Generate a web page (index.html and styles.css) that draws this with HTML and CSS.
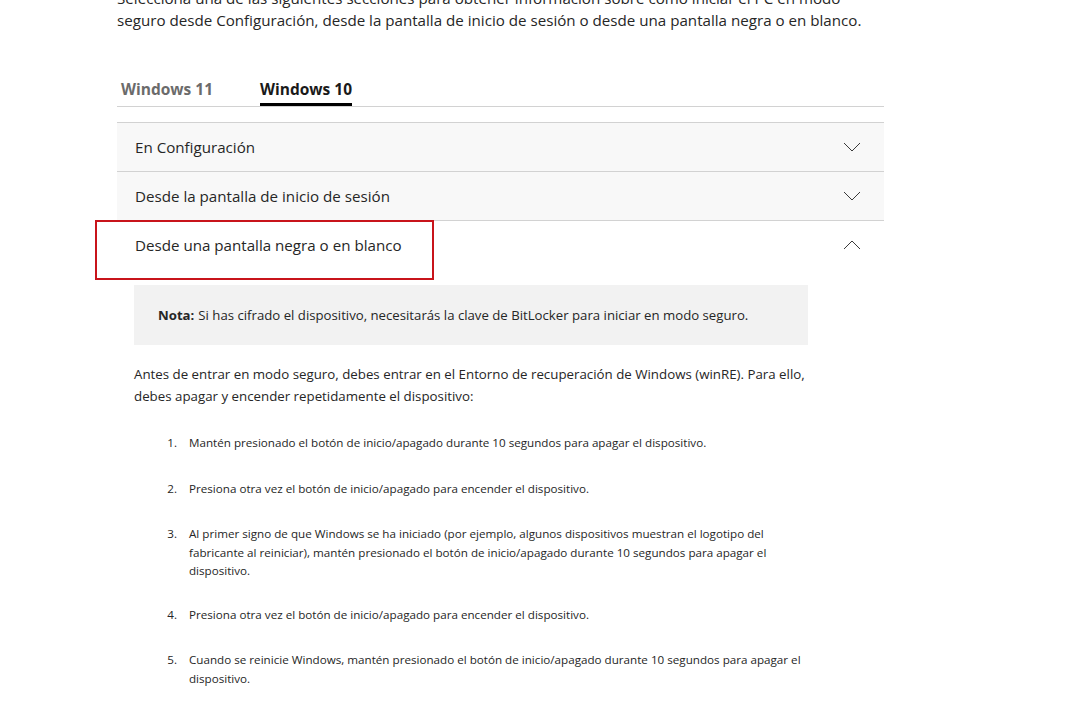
FILE: index.html
```html
<!DOCTYPE html>
<html lang="es">
<head>
<meta charset="utf-8">
<title>Modo seguro</title>
<link rel="stylesheet" href="styles.css">
</head>
<body>
<main class="page">
  <p class="intro">Selecciona una de las siguientes secciones para obtener información sobre cómo iniciar el PC en modo seguro desde Configuración, desde la pantalla de inicio de sesión o desde una pantalla negra o en blanco.</p>

  <nav class="tabs">
    <span class="tab">Windows 11</span>
    <span class="tab tab-active">Windows 10</span>
  </nav>

  <section class="accordion">
    <div class="item">
      <div class="item-head">
        <span>En Configuración</span>
        <svg class="chev" width="18" height="10" viewBox="0 0 18 10"><polyline points="1,1 9,9 17,1" fill="none" stroke="#3a3a3a" stroke-width="1"/></svg>
      </div>
    </div>
    <div class="item">
      <div class="item-head">
        <span>Desde la pantalla de inicio de sesión</span>
        <svg class="chev" width="18" height="10" viewBox="0 0 18 10"><polyline points="1,1 9,9 17,1" fill="none" stroke="#3a3a3a" stroke-width="1"/></svg>
      </div>
    </div>
    <div class="item item-open">
      <div class="highlight"></div>
      <div class="item-head">
        <span>Desde una pantalla negra o en blanco</span>
        <svg class="chev" width="18" height="10" viewBox="0 0 18 10"><polyline points="1,9 9,1 17,9" fill="none" stroke="#3a3a3a" stroke-width="1"/></svg>
      </div>
      <div class="panel">
        <div class="note"><b>Nota:</b> Si has cifrado el dispositivo, necesitarás la clave de BitLocker para iniciar en modo seguro.</div>
        <p class="body-text">Antes de entrar en modo seguro, debes entrar en el Entorno de recuperación de Windows (winRE). Para ello, debes apagar y encender repetidamente el dispositivo:</p>
        <ol class="steps">
          <li>Mantén presionado el botón de inicio/apagado durante 10 segundos para apagar el dispositivo.</li>
          <li>Presiona otra vez el botón de inicio/apagado para encender el dispositivo.</li>
          <li>Al primer signo de que Windows se ha iniciado (por ejemplo, algunos dispositivos muestran el logotipo del fabricante al reiniciar), mantén presionado el botón de inicio/apagado durante 10 segundos para apagar el dispositivo.</li>
          <li>Presiona otra vez el botón de inicio/apagado para encender el dispositivo.</li>
          <li>Cuando se reinicie Windows, mantén presionado el botón de inicio/apagado durante 10 segundos para apagar el dispositivo.</li>
        </ol>
      </div>
    </div>
  </section>
</main>
</body>
</html>
```

FILE: styles.css
```css
*, *::before, *::after { box-sizing: border-box; }
html, body { margin: 0; padding: 0; background: #fff; }
body {
  font-family: "Open Sans", "Noto Sans", "Liberation Sans", sans-serif;
  color: #262626;
  overflow: hidden;
  height: 708px;
}
.page {
  width: 767px;
  margin-left: 117px;
}
.intro {
  margin: -13px 0 0 0;
  font-size: 15.15px;
  line-height: 22px;
  width: 760px;
}
.tabs {
  display: flex;
  gap: 47px;
  margin-top: 48px;
  padding-left: 4px;
  border-bottom: 1px solid #d2d2d2;
}
.tab {
  font-size: 15.5px;
  font-weight: 700;
  line-height: 20px;
  color: #6b6b6b;
  padding-bottom: 4px;
  border-bottom: 3px solid transparent;
}
.tab-active {
  color: #1a1a1a;
  border-bottom-color: #000;
}
.accordion {
  margin-top: 15px;
}
.item {
  border-top: 1px solid #d2d2d2;
  background: #f8f8f8;
  position: relative;
}
.item-open {
  background: #fff;
}
.item-head {
  height: 48px;
  display: flex;
  align-items: center;
  justify-content: space-between;
  padding: 0 23px 0 18px;
  font-size: 15.15px;
}
.chev { display: block; }
.highlight {
  position: absolute;
  top: -1px;
  left: -22px;
  width: 339px;
  height: 60px;
  border: 2px solid #c8141b;
  pointer-events: none;
}
.panel {
  padding: 16px 76px 0 17px;
}
.note {
  background: #f2f2f2;
  height: 60px;
  padding: 0 24px;
  display: flex;
  align-items: center;
  font-size: 13.2px;
  gap: 4px;
}
.note b { font-weight: 700; }
.body-text {
  margin: 18px 0 0 0;
  font-size: 13.3px;
  line-height: 22px;
}
.steps {
  list-style: none;
  margin: 0;
  padding: 0;
  counter-reset: step;
  font-size: 11.65px;
  line-height: 18.5px;
}
.steps li {
  counter-increment: step;
  display: flex;
  margin-top: 27px;
}
.steps li:nth-child(4) { margin-top: 25px; }
.steps li::before {
  content: counter(step) ".";
  flex: 0 0 55px;
  text-align: right;
  padding-right: 12px;
}
```
